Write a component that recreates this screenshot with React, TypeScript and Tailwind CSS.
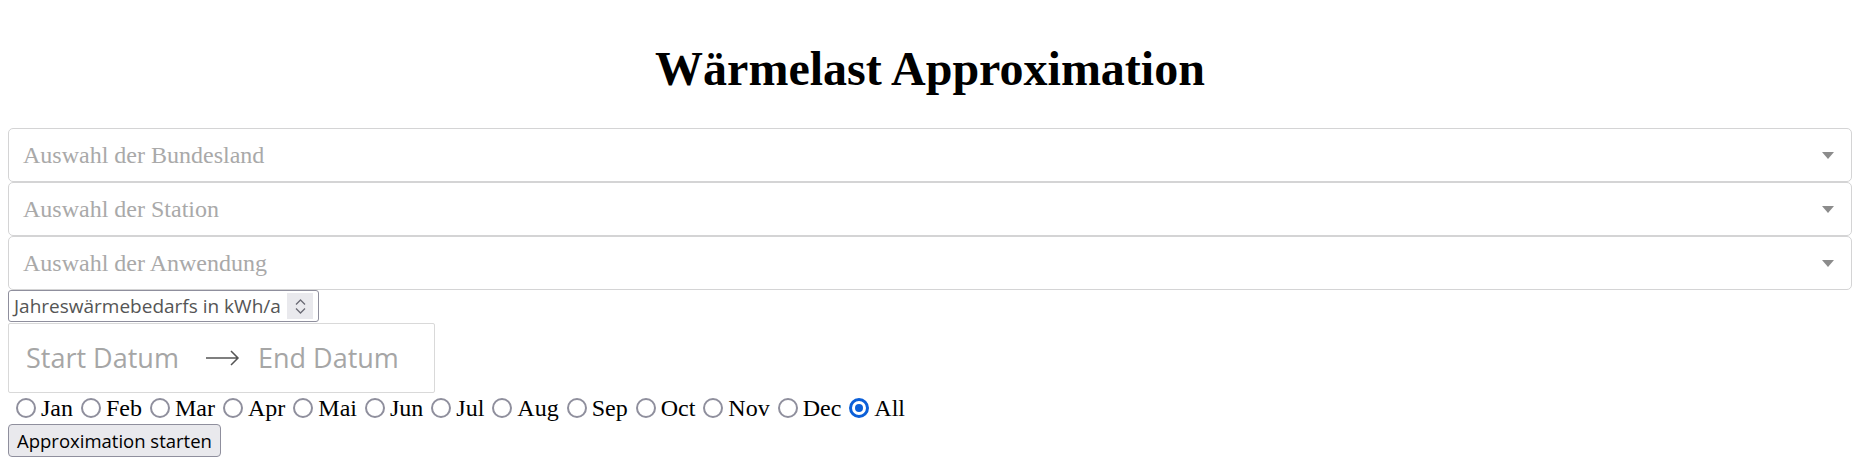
import React, { useState } from 'react';

const selects = ['Auswahl der Bundesland', 'Auswahl der Station', 'Auswahl der Anwendung'];
const months = ['Jan', 'Feb', 'Mar', 'Apr', 'Mai', 'Jun', 'Jul', 'Aug', 'Sep', 'Oct', 'Nov', 'Dec', 'All'];

const App = () => {
  const [month, setMonth] = useState('All');

  return (
    <div className="min-h-[470px] bg-white font-['Liberation_Serif',serif] text-black">
      <div className="ml-[8px] w-[1844px]">
        <h1 className="pt-[42px] mb-[33px] text-center text-[48px] font-bold leading-[53px]">
          Wärmelast Approximation
        </h1>

        {/* Dropdowns */}
        {selects.map((label) => (
          <div
            key={label}
            className="flex h-[54px] items-center justify-between rounded-[5px] border border-[#d4d4d5] pl-[14px] pr-[17px] text-[24px] leading-[28px] text-[#a9a9a9]"
          >
            <span>{label}</span>
            <svg width="12" height="7" viewBox="0 0 12 7">
              <path d="M0 0h12L6 7z" fill="#8c8c8c" />
            </svg>
          </div>
        ))}

        {/* Number input */}
        <div className="flex h-[32px] w-[311px] items-center rounded-[3px] border border-[#8f8f9d] pl-[5px] pr-[5px] font-['Open_Sans',sans-serif] text-[19px] text-[#555555]">
          <span className="leading-[26px]">Jahreswärmebedarfs in kWh/a</span>
          <div className="ml-auto flex h-[26px] w-[26px] flex-col items-center justify-center gap-[3px] bg-[#e9e9ed]">
            <svg width="11" height="6" viewBox="0 0 11 6">
              <path d="M1 5.5L5.5 1L10 5.5" fill="none" stroke="#6b6b75" strokeWidth="1.3" />
            </svg>
            <svg width="11" height="6" viewBox="0 0 11 6">
              <path d="M1 0.5L5.5 5L10 0.5" fill="none" stroke="#6b6b75" strokeWidth="1.3" />
            </svg>
          </div>
        </div>

        {/* Date range */}
        <div className="mt-[1px] flex h-[70px] w-[427px] items-center rounded-[2px] border border-[#d9d9d9] pl-[17px] font-['Open_Sans',sans-serif] text-[27px] text-[#a6a6a6]">
          <span className="w-[180px] leading-[36px]">Start Datum</span>
          <svg width="34" height="16" viewBox="0 0 34 16">
            <path d="M0 8h32M25 1l7 7-7 7" fill="none" stroke="#555" strokeWidth="1.5" />
          </svg>
          <span className="ml-[18px] leading-[36px]">End Datum</span>
        </div>

        {/* Month radios */}
        <div className="flex h-[30px] items-center pl-[8px] text-[24px]">
          {months.map((m) => (
            <label key={m} className="mr-[8px] flex cursor-pointer items-center" onClick={() => setMonth(m)}>
              {month === m ? (
                <span className="mr-[5px] flex h-[20px] w-[20px] shrink-0 items-center justify-center rounded-full border-[3px] border-[#0b5fd8] bg-white">
                  <span className="h-[8px] w-[8px] rounded-full bg-[#0b5fd8]" />
                </span>
              ) : (
                <span className="mr-[5px] h-[20px] w-[20px] shrink-0 rounded-full border-2 border-[#8f8f9d] bg-white" />
              )}
              <span className="leading-[28px]">{m}</span>
            </label>
          ))}
        </div>

        <button className="mt-[1px] h-[33px] w-[213px] rounded-[4px] border border-[#8f8f9d] bg-[#e9e9ed] font-['Open_Sans',sans-serif] text-[18.5px] leading-[26px] text-black">
          Approximation starten
        </button>
      </div>
    </div>
  );
};

export default App;
